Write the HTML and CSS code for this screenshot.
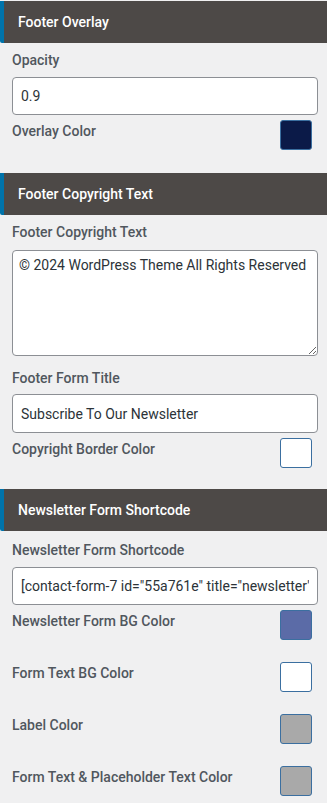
FILE: index.html
```html
<!DOCTYPE html>
<html>
<head>
<meta charset="utf-8">
<link rel="stylesheet" href="styles.css">
</head>
<body>
<div class="panel">
  <section class="section sec-overlay">
    <h3 class="section-head">Footer Overlay</h3>
    <div class="section-body">
      <label class="field-label">Opacity</label>
      <input class="text-input" type="text" value="0.9">
      <div class="color-row">
        <span class="color-label">Overlay Color</span>
        <span class="swatch swatch-navy"></span>
      </div>
    </div>
  </section>

  <section class="section sec-copyright">
    <h3 class="section-head">Footer Copyright Text</h3>
    <div class="section-body">
      <label class="field-label label-area">Footer Copyright Text</label>
      <textarea class="text-area">© 2024 WordPress Theme All Rights Reserved</textarea>
      <label class="field-label spaced">Footer Form Title</label>
      <input class="text-input tall" type="text" value="Subscribe To Our Newsletter">
      <div class="color-row">
        <span class="color-label">Copyright Border Color</span>
        <span class="swatch swatch-white"></span>
      </div>
    </div>
  </section>

  <section class="section sec-newsletter">
    <h3 class="section-head">Newsletter Form Shortcode</h3>
    <div class="section-body">
      <label class="field-label">Newsletter Form Shortcode</label>
      <input class="text-input" type="text" value='[contact-form-7 id="55a761e" title="newsletter"]'>
      <div class="color-row">
        <span class="color-label">Newsletter Form BG Color</span>
        <span class="swatch swatch-blue"></span>
      </div>
      <div class="color-row">
        <span class="color-label">Form Text BG Color</span>
        <span class="swatch swatch-white"></span>
      </div>
      <div class="color-row">
        <span class="color-label">Label Color</span>
        <span class="swatch swatch-gray"></span>
      </div>
      <div class="color-row">
        <span class="color-label">Form Text &amp; Placeholder Text Color</span>
        <span class="swatch swatch-gray"></span>
      </div>
    </div>
  </section>
</div>
</body>
</html>
```

FILE: styles.css
```css
html, body {
  margin: 0;
  padding: 0;
  background: #f0f0f1;
}
body {
  font-family: Roboto, "Liberation Sans", sans-serif;
  color: #50575e;
  width: 327px;
  overflow: hidden;
}
.panel {
  padding-top: 1px;
}
.sec-overlay {
  margin-bottom: 23px;
}
.sec-copyright {
  margin-bottom: 21px;
}
.section-head {
  margin: 0;
  height: 42px;
  box-sizing: border-box;
  background: #4d4947;
  border-left: 4px solid #0073aa;
  border-bottom-left-radius: 2px;
  color: #ffffff;
  font-size: 14px;
  font-weight: 500;
  line-height: 42px;
  padding-left: 14px;
}
.section-body {
  padding: 7px 9px 0 12px;
  display: flex;
  flex-direction: column;
}
.sec-newsletter .section-body {
  padding-top: 9px;
}
.field-label {
  display: block;
  font-size: 14px;
  font-weight: 500;
  line-height: 20px;
  margin-bottom: 7px;
  color: #50575e;
}
.field-label.label-area {
  margin-bottom: 8px;
}
.field-label.spaced {
  margin-top: 12px;
  margin-bottom: 6px;
}
.text-input {
  box-sizing: border-box;
  width: 306px;
  height: 38px;
  margin: 0;
  border: 1px solid #8c8f94;
  border-radius: 4px;
  background: #ffffff;
  padding: 0 8px;
  font-family: Roboto, "Liberation Sans", sans-serif;
  font-size: 14px;
  color: #2c3338;
}
.text-input.tall {
  height: 39px;
}
.text-area {
  box-sizing: border-box;
  width: 306px;
  height: 106px;
  margin: 0;
  border: 1px solid #8c8f94;
  border-radius: 4px;
  background: #ffffff;
  padding: 4px 6px;
  font-family: Roboto, "Liberation Sans", sans-serif;
  font-size: 14px;
  line-height: 20px;
  color: #2c3338;
  display: block;
}
.color-row {
  display: flex;
  justify-content: space-between;
  align-items: flex-start;
  margin-top: 5px;
  padding-right: 6px;
}
.color-row + .color-row {
  margin-top: 22px;
}
.color-label {
  font-size: 14px;
  font-weight: 500;
  line-height: 22px;
}
.swatch {
  box-sizing: border-box;
  width: 32px;
  height: 30px;
  border: 1px solid #3b6fa0;
  border-radius: 3px;
}
.swatch-navy { background: #0b1a48; }
.swatch-white { background: #ffffff; }
.swatch-blue { background: #5b6ba7; }
.swatch-gray { background: #a9a9a9; }
```
